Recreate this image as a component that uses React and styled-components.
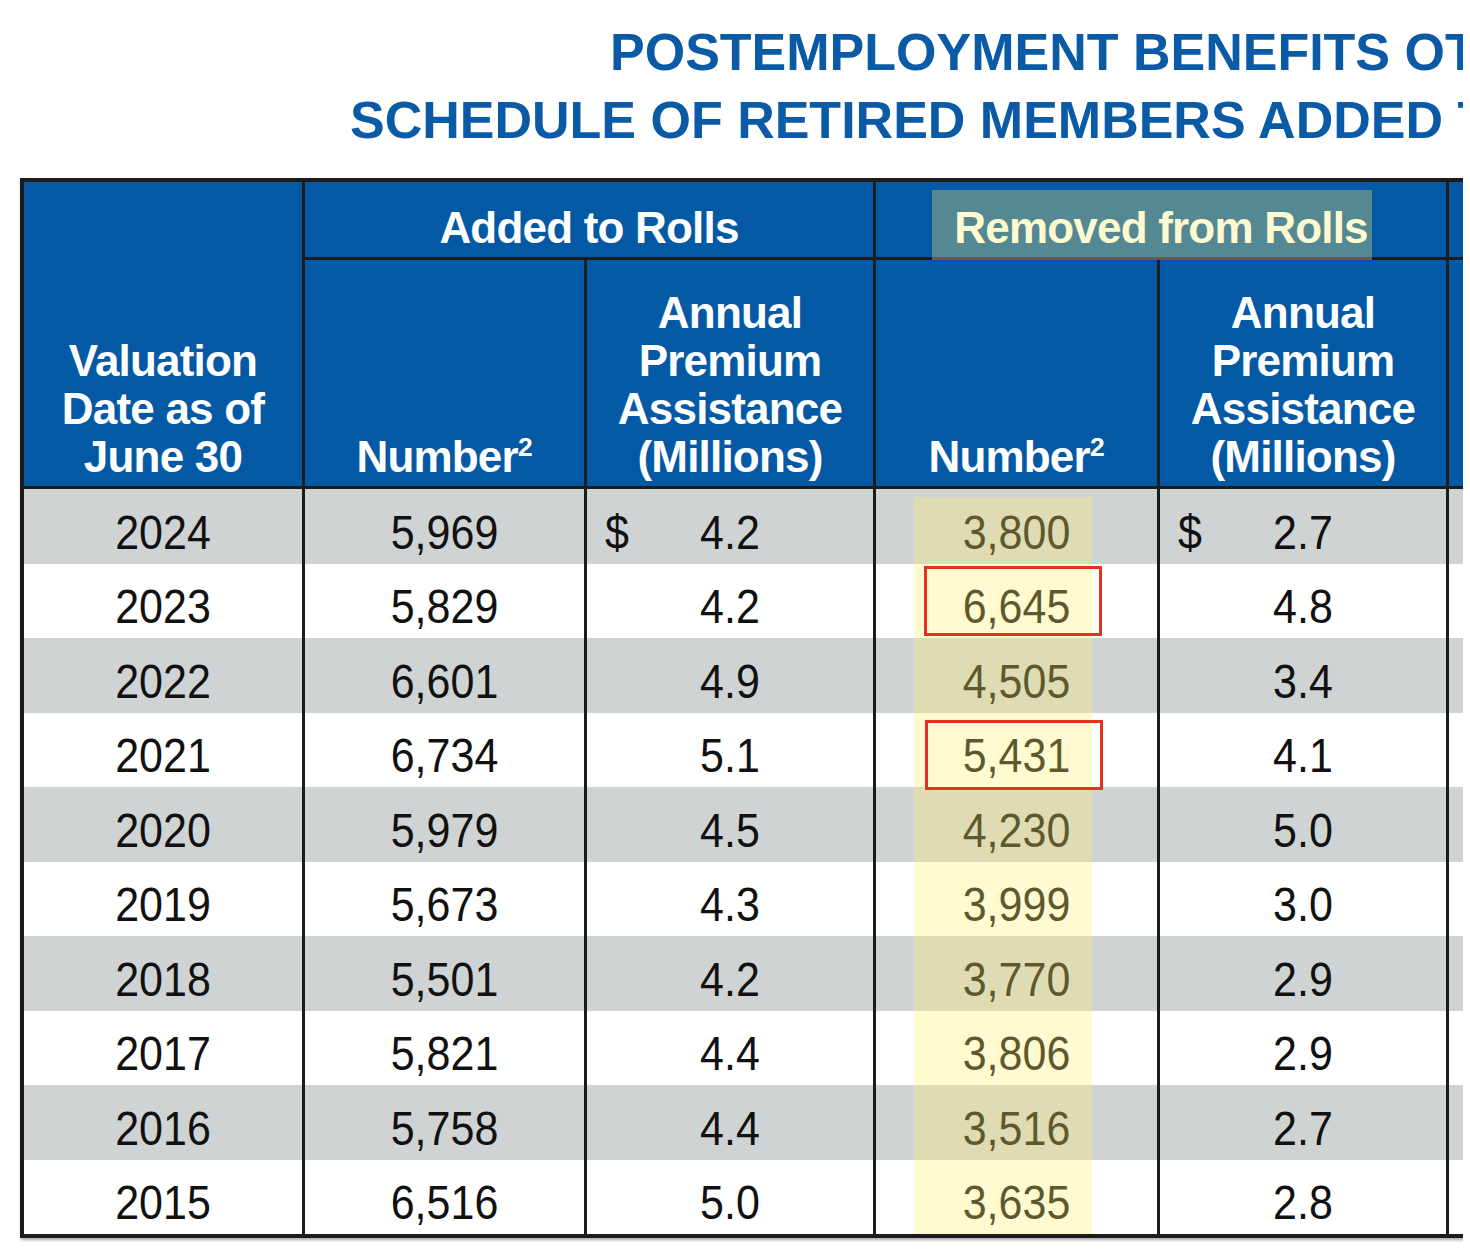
import React from 'react';
import styled, { createGlobalStyle } from 'styled-components';

const GlobalStyle = createGlobalStyle`
  html, body {
    margin: 0;
    padding: 0;
    background: #ffffff;
  }
  body {
    font-family: "Liberation Sans", Arial, Helvetica, sans-serif;
  }
`;

const columns = '278px 279px 286px 281px 286px 1fr';

const Page = styled.div`
  width: 1463px;
  height: 1252px;
  overflow: hidden;
  background: #ffffff;
`;

const TitleBlock = styled.header`
  padding-top: 18px;
  padding-bottom: 3px;
  color: #0b5aa6;
  font-size: 52px;
  font-weight: 700;
  line-height: 68px;
  white-space: nowrap;
`;

const TitleLine = styled.div`
  padding-left: ${(p) => p.$indent}px;
`;

const Table = styled.div`
  margin: 21px 0 0 20px;
  width: 1700px;
  border: 4px solid #1c1c1c;
  background: #1c1c1c;
  box-shadow: 1px 2px 3px rgba(0, 0, 0, 0.35);
`;

const Head = styled.div`
  position: relative;
  display: grid;
  grid-template-columns: ${columns};
  grid-template-rows: 75px 226px;
  gap: 3px;
  border-bottom: 3px solid #1c1c1c;
`;

const HeadCell = styled.div`
  grid-column: ${(p) => p.$col};
  grid-row: ${(p) => p.$row};
  background: #0459a5;
  color: #ffffff;
  font-size: 44px;
  font-weight: 700;
  letter-spacing: -0.8px;
  line-height: 48px;
  text-align: center;
  display: flex;
  flex-direction: column;
  align-items: center;
  justify-content: flex-end;
  padding-bottom: 5px;
`;

const GroupCell = styled(HeadCell)`
  justify-content: center;
  padding: 16px 0 0;
`;

const Sup = styled.sup`
  font-size: 0.6em;
  line-height: 0;
  vertical-align: baseline;
  position: relative;
  top: -0.62em;
  letter-spacing: 0;
`;

const HeadHighlight = styled.div`
  position: absolute;
  left: 908px;
  top: 8px;
  width: 440px;
  height: 70px;
  background: rgba(255, 240, 110, 0.32);
`;

const Body = styled.div`
  position: relative;
  display: grid;
  grid-template-columns: ${columns};
  grid-auto-rows: 74.5px;
  column-gap: 3px;
`;

const Cell = styled.div`
  background: ${(p) => (p.$shade ? '#d0d3d4' : '#ffffff')};
  display: grid;
  grid-template-columns: 1fr auto 1fr;
  align-items: center;
  padding-top: 12px;
  color: #111111;
  font-size: 43px;
  line-height: 1;
`;

const Value = styled.span`
  grid-column: 2;
  display: inline-block;
  transform: scaleY(1.14);
`;

const Dollar = styled.span`
  grid-column: 1;
  justify-self: start;
  padding-left: 18px;
  display: inline-block;
  transform: scaleY(1.14);
`;

const ColumnHighlight = styled.div`
  position: absolute;
  left: 890px;
  top: 8px;
  bottom: 0;
  width: 178px;
  background: rgba(255, 240, 110, 0.32);
`;

const MarkBox = styled.div`
  position: absolute;
  left: ${(p) => p.$left}px;
  top: ${(p) => p.$top}px;
  width: 178px;
  height: 70px;
  box-sizing: border-box;
  border: 3px solid #e8301f;
`;

const rows = [
  ['2024', '5,969', '4.2', '3,800', '2.7'],
  ['2023', '5,829', '4.2', '6,645', '4.8'],
  ['2022', '6,601', '4.9', '4,505', '3.4'],
  ['2021', '6,734', '5.1', '5,431', '4.1'],
  ['2020', '5,979', '4.5', '4,230', '5.0'],
  ['2019', '5,673', '4.3', '3,999', '3.0'],
  ['2018', '5,501', '4.2', '3,770', '2.9'],
  ['2017', '5,821', '4.4', '3,806', '2.9'],
  ['2016', '5,758', '4.4', '3,516', '2.7'],
  ['2015', '6,516', '5.0', '3,635', '2.8'],
];

const moneyCols = [2, 4];

const App = () => {
  return (
    <Page>
      <GlobalStyle />
      <TitleBlock>
        <TitleLine $indent={610}>POSTEMPLOYMENT BENEFITS OTHER THAN PENSIONS</TitleLine>
        <TitleLine $indent={350}>SCHEDULE OF RETIRED MEMBERS ADDED TO AND REMOVED FROM ROLLS</TitleLine>
      </TitleBlock>

      <Table>
        <Head>
          <HeadCell $col="1" $row="1 / span 2">
            <div>Valuation</div>
            <div>Date as of</div>
            <div>June 30</div>
          </HeadCell>
          <GroupCell $col="2 / span 2" $row="1">Added to Rolls</GroupCell>
          <GroupCell $col="4 / span 2" $row="1">Removed from Rolls</GroupCell>
          <GroupCell $col="6" $row="1" />
          <HeadCell $col="2" $row="2">
            <div>Number<Sup>2</Sup></div>
          </HeadCell>
          <HeadCell $col="3" $row="2">
            <div>Annual</div>
            <div>Premium</div>
            <div>Assistance</div>
            <div>(Millions)</div>
          </HeadCell>
          <HeadCell $col="4" $row="2">
            <div>Number<Sup>2</Sup></div>
          </HeadCell>
          <HeadCell $col="5" $row="2">
            <div>Annual</div>
            <div>Premium</div>
            <div>Assistance</div>
            <div>(Millions)</div>
          </HeadCell>
          <HeadCell $col="6" $row="2" />
          <HeadHighlight />
        </Head>

        <Body>
          {rows.map((row, i) => (
            <React.Fragment key={row[0]}>
              {row.map((val, c) => (
                <Cell key={c} $shade={i % 2 === 0}>
                  {i === 0 && moneyCols.includes(c) && <Dollar>$</Dollar>}
                  <Value>{val}</Value>
                </Cell>
              ))}
              <Cell $shade={i % 2 === 0} />
            </React.Fragment>
          ))}
          <ColumnHighlight />
          <MarkBox $left={900} $top={77} />
          <MarkBox $left={901} $top={231} />
        </Body>
      </Table>
    </Page>
  );
};

export default App;
